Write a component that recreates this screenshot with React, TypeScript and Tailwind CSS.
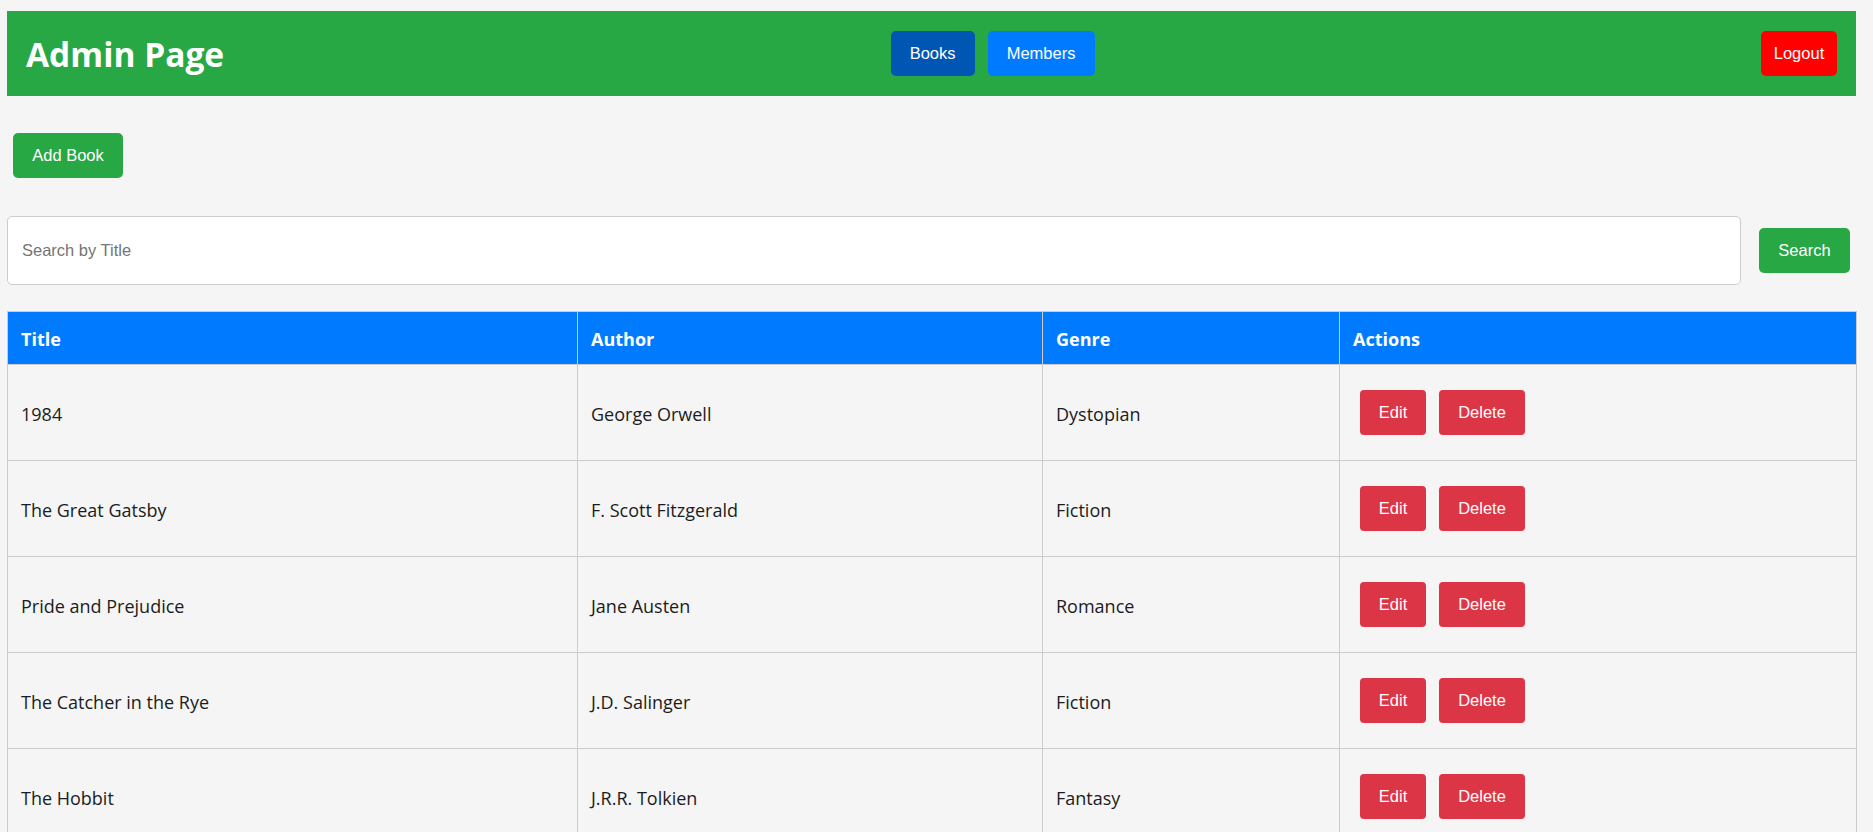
import React from "react";

const books = [
  { title: "1984", author: "George Orwell", genre: "Dystopian" },
  { title: "The Great Gatsby", author: "F. Scott Fitzgerald", genre: "Fiction" },
  { title: "Pride and Prejudice", author: "Jane Austen", genre: "Romance" },
  { title: "The Catcher in the Rye", author: "J.D. Salinger", genre: "Fiction" },
  { title: "The Hobbit", author: "J.R.R. Tolkien", genre: "Fantasy" },
];

const sans = "font-['Open_Sans','Noto_Sans',sans-serif]";
const arial = "font-['Liberation_Sans',Arial,sans-serif]";

export default function App() {
  return (
    <div className={`min-h-screen bg-[#f5f5f5] pl-[7px] pr-[17px] pt-[11px] ${sans}`}>
      <header className="h-[85px] bg-[#28a745] flex items-center justify-between px-[19px]">
        <h1 className="text-[33.5px] font-bold text-white leading-none pt-[3px]">Admin Page</h1>
        <nav className={`flex gap-[13px] ${arial}`}>
          <button className="h-[45px] w-[84px] rounded-[5px] bg-[#0056b3] text-white text-[16.5px]">Books</button>
          <button className="h-[45px] w-[107px] rounded-[5px] bg-[#007bff] text-white text-[16.5px]">Members</button>
        </nav>
        <button className={`h-[45px] w-[76px] rounded-[5px] bg-[#ff0000] text-white text-[16.5px] ${arial}`}>Logout</button>
      </header>

      <div className="mt-[37px] ml-[6px]">
        <button className={`h-[45px] w-[110px] rounded-[5px] bg-[#28a745] text-white text-[16.5px] ${arial}`}>Add Book</button>
      </div>

      <div className="mt-[38px] flex items-center gap-[18px] pr-[6px]">
        <input
          type="text"
          placeholder="Search by Title"
          className={`flex-1 h-[69px] bg-white border border-[#ccc] rounded-[5px] px-[14px] text-[16.5px] placeholder:text-[#757575] outline-none ${arial}`}
        />
        <button className={`h-[45px] w-[91px] rounded-[5px] bg-[#28a745] text-white text-[16.5px] ${arial}`}>Search</button>
      </div>

      <table className="mt-[26px] w-full table-fixed border-collapse border border-[#ccc] text-[18px]">
        <colgroup>
          <col className="w-[570px]" />
          <col className="w-[465px]" />
          <col className="w-[297px]" />
          <col className="w-[517px]" />
        </colgroup>
        <thead>
          <tr className="h-[53px] bg-[#007bff] text-white">
            {["Title", "Author", "Genre", "Actions"].map((h) => (
              <th key={h} className="border border-[#ccc] px-[13px] pt-[2px] text-left font-bold">{h}</th>
            ))}
          </tr>
        </thead>
        <tbody className="text-[#1c1c1c]">
          {books.map((b) => (
            <tr key={b.title} className="h-[96px]">
              <td className="border border-[#ccc] px-[13px] pt-[4px]">{b.title}</td>
              <td className="border border-[#ccc] px-[13px] pt-[4px]">{b.author}</td>
              <td className="border border-[#ccc] px-[13px] pt-[4px]">{b.genre}</td>
              <td className="border border-[#ccc] px-[13px]">
                <div className={`flex gap-[13px] ml-[7px] ${arial}`}>
                  <button className="h-[45px] w-[66px] rounded-[4px] bg-[#dc3545] text-white text-[16.5px]">Edit</button>
                  <button className="h-[45px] w-[86px] rounded-[4px] bg-[#dc3545] text-white text-[16.5px]">Delete</button>
                </div>
              </td>
            </tr>
          ))}
        </tbody>
      </table>
    </div>
  );
}
